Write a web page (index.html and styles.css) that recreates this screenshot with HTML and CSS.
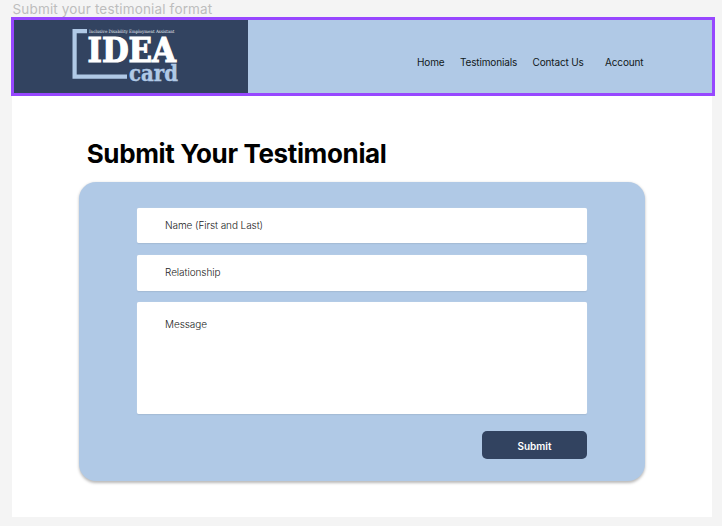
FILE: index.html
```html
<!DOCTYPE html>
<html lang="en">
<head>
<meta charset="utf-8">
<title>Submit Your Testimonial</title>
<link rel="stylesheet" href="styles.css">
</head>
<body>
<div class="frame-label">Submit your testimonial format</div>
<header class="header">
  <a class="brand" aria-label="IDEA card">
    <svg class="logo" width="120" height="73" viewBox="72 20 120 73">
      <path class="logo-bracket" d="M87 31.2H74.6V76.6H127"/>
      <text class="logo-tagline" x="89" y="32.6" textLength="85.5" lengthAdjust="spacingAndGlyphs">Inclusive Disability Employment Assistant</text>
      <text class="logo-idea" x="87.5" y="61.6" textLength="88.5" lengthAdjust="spacingAndGlyphs">IDEA</text>
      <text class="logo-card" x="129" y="81.4" textLength="49" lengthAdjust="spacingAndGlyphs">card</text>
    </svg>
  </a>
  <nav class="nav">
    <a class="nav-home">Home</a>
    <a class="nav-testimonials">Testimonials</a>
    <a class="nav-contact">Contact Us</a>
    <a>Account</a>
  </nav>
</header>
<main class="page">
  <h1 class="title">Submit Your Testimonial</h1>
  <form class="card">
    <div class="field">Name (First and Last)</div>
    <div class="field field-relationship">Relationship</div>
    <div class="field field-message">Message</div>
    <button class="submit" type="button">Submit</button>
  </form>
</main>
</body>
</html>
```

FILE: styles.css
```css
* { box-sizing: border-box; }

body {
  margin: 0;
  height: 526px;
  overflow: hidden;
  background: #f4f4f4;
  font-family: Inter, "Liberation Sans", sans-serif;
  color: #000;
}

.frame-label {
  height: 17px;
  padding-left: 12.5px;
  font-size: 13.5px;
  line-height: 18px;
  letter-spacing: 0.16px;
  color: #bdbdbd;
  white-space: nowrap;
}

.header {
  display: flex;
  width: 704px;
  height: 79px;
  margin-left: 11px;
  border: 3px solid #9747ff;
  background: #b0c9e6;
}

.brand {
  width: 234px;
  padding-left: 58px;
  background: #324360;
}

.logo { display: block; }

.logo-bracket {
  fill: none;
  stroke: #b0c9e6;
  stroke-width: 4.2;
}

.logo text { font-family: "DejaVu Serif", serif; }
.logo .logo-tagline { font-size: 4.4px; fill: #e4e9f0; }
.logo .logo-idea {
  font-size: 33px;
  font-weight: 700;
  fill: #fff;
  stroke: #fff;
  stroke-width: 1.2;
}
.logo .logo-card {
  font-size: 21.5px;
  font-weight: 700;
  fill: #b0c9e6;
  stroke: #b0c9e6;
  stroke-width: 0.4;
}

.nav {
  display: flex;
  align-items: center;
  padding: 10px 0 0 169px;
  font-size: 10px;
  letter-spacing: -0.15px;
  white-space: nowrap;
}

.nav a { color: #111820; }
.nav-home { width: 43px; }
.nav-testimonials { width: 72.5px; }
.nav-contact { width: 72.5px; }

.page {
  width: 700px;
  height: 421px;
  margin-left: 12px;
  padding: 41px 67px 0;
  background: #fff;
}

.title {
  margin: 0 0 12px 7.7px;
  font-size: 26px;
  line-height: 33px;
  font-weight: 700;
  letter-spacing: -0.36px;
  white-space: nowrap;
}

.card {
  display: flex;
  flex-direction: column;
  height: 298.5px;
  padding: 26px 58px 0;
  border-radius: 17px;
  background: #b0c9e6;
  box-shadow: 0 1.5px 3px rgba(0, 0, 0, 0.28);
}

.field {
  height: 35px;
  padding-left: 28px;
  border-radius: 2px;
  background: #fff;
  box-shadow: 0 0 1px rgba(255, 255, 255, 0.8), 0 0.5px 1px rgba(50, 67, 96, 0.15);
  font-size: 10px;
  line-height: 35px;
  letter-spacing: -0.08px;
  font-weight: 300;
  color: #222;
}

.field-relationship {
  height: 36px;
  margin-top: 12px;
}

.field-message {
  height: 112px;
  margin-top: 11px;
  line-height: 44px;
}

.submit {
  align-self: flex-end;
  width: 105px;
  height: 28px;
  margin-top: 17px;
  padding: 2px 0 0;
  border: 0;
  border-radius: 5px;
  background: #324360;
  font: 600 10px Inter, "Liberation Sans", sans-serif;
  color: #fff;
}
```
